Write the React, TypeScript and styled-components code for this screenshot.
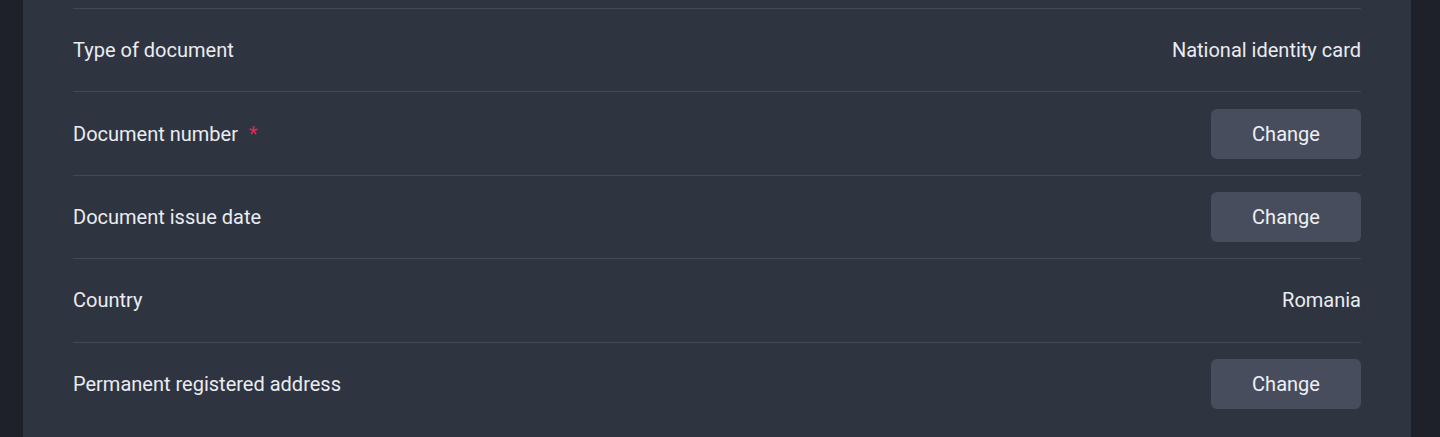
import React from "react";
import styled, { createGlobalStyle } from "styled-components";

const Global = createGlobalStyle`
  html, body { margin: 0; padding: 0; background: #1e2129; }
  body { font-family: Roboto, "Noto Sans", "Liberation Sans", sans-serif; }
  #root { min-height: 437px; }
`;

const Page = styled.div`
  display: flex;
  min-height: 437px;
  padding-left: 23px;
  background: #1e2129;
`;

const Panel = styled.section`
  width: 1388px;
  box-sizing: border-box;
  background: #2f3441;
  padding: 8px 50px 0;
  min-height: 437px;
`;

const Row = styled.div`
  display: flex;
  align-items: center;
  justify-content: space-between;
  box-sizing: border-box;
  min-height: 83.4px;
  border-top: 1px solid #434957;
`;

const Label = styled.span`
  font-size: 20px;
  color: #eaecf1;
  display: flex;
  align-items: center;
`;

const Required = styled.span`
  color: #e8264f;
  margin-left: 11px;
  font-size: 20px;
`;

const Value = styled.span`
  font-size: 20px;
  color: #eaecf1;
`;

const ChangeButton = styled.button`
  width: 150px;
  height: 50px;
  border: none;
  border-radius: 6px;
  background: #474d5c;
  color: #eef0f5;
  font-family: inherit;
  font-size: 20px;
  cursor: pointer;
`;

type Item = { label: string; required?: boolean; value?: string };

const items: Item[] = [
  { label: "Type of document", value: "National identity card" },
  { label: "Document number", required: true },
  { label: "Document issue date" },
  { label: "Country", value: "Romania" },
  { label: "Permanent registered address" },
];

export default function App() {
  return (
    <>
      <Global />
      <Page>
        <Panel>
          {items.map((it) => (
            <Row key={it.label}>
              <Label>
                {it.label}
                {it.required && <Required>*</Required>}
              </Label>
              {it.value ? <Value>{it.value}</Value> : <ChangeButton>Change</ChangeButton>}
            </Row>
          ))}
        </Panel>
      </Page>
    </>
  );
}
